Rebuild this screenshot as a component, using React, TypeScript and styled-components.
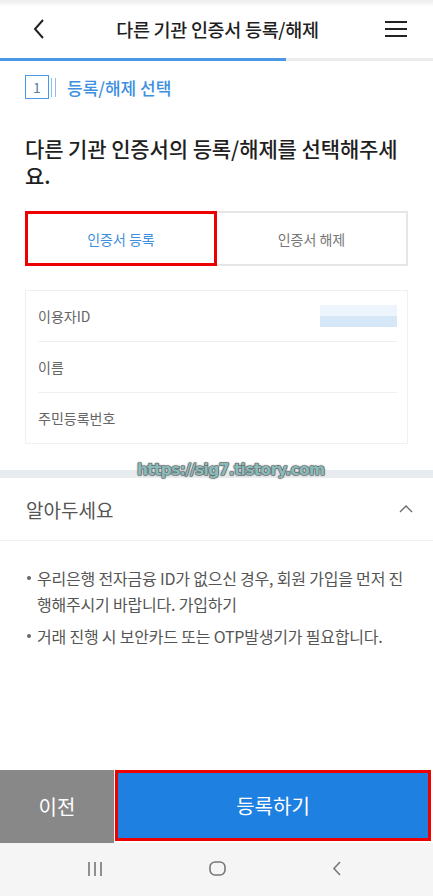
import styled, { createGlobalStyle } from "styled-components";

const GlobalStyle = createGlobalStyle`
    body {
        margin: 0;
        background: #fff;
        font-family: "Noto Sans CJK KR", "Noto Sans", sans-serif;
        color: #222;
    }
`

const Page = styled.div`
    position: relative;
    width: 433px;
    min-height: 896px;
    display: flex;
    flex-direction: column;
    overflow: hidden;
`

const Header = styled.header`
    height: 58px;
    display: flex;
    align-items: center;
    justify-content: space-between;
    padding: 0 25px 0 27px;
    background: linear-gradient(#ececec 0, #fff 7px);
    h1 {
        margin: 0;
        font-size: 18.5px;
        font-weight: 500;
        letter-spacing: -0.3px;
        color: #1f1f1f;
    }
`

const IconButton = styled.div`
    width: 24px;
    height: 24px;
    display: flex;
    align-items: center;
    justify-content: center;
`

const Progress = styled.div`
    height: 3px;
    background: #ececec;
`

const ProgressFill = styled.div<{ $ratio: number }>`
    height: 100%;
    width: ${(p) => p.$ratio * 100}%;
    background: #4a98e6;
`

const Content = styled.main`
    padding: 14px 25px 0;
`

const StepRow = styled.div`
    display: flex;
    align-items: center;
    height: 24px;
    span {
        margin-left: 11px;
        font-size: 17px;
        font-weight: 500;
        color: #3d8fe0;
    }
`

const StepNumber = styled.div`
    width: 22px;
    height: 22px;
    border: 1px solid #4a98e6;
    display: flex;
    align-items: center;
    justify-content: center;
    font-size: 14px;
    color: #5a7da0;
`

const StepLines = styled.div`
    margin-left: 2px;
    width: 3px;
    height: 19px;
    border-left: 1px solid #8cbcec;
    border-right: 1px solid #8cbcec;
`

const Heading = styled.h2`
    margin: 36px 0 0;
    max-width: 383px;
    font-size: 21px;
    line-height: 27px;
    font-weight: 500;
    color: #1f1f1f;
    letter-spacing: -0.1px;
`

const Tabs = styled.div`
    margin-top: 22px;
    display: grid;
    grid-template-columns: 192px 1fr;
    height: 55px;
`

const Tab = styled.button<{ $active?: boolean }>`
    font-family: inherit;
    font-size: 14px;
    background: #fff;
    cursor: pointer;
    color: ${(p) => (p.$active ? "#3d8fe0" : "#777")};
    border: ${(p) => (p.$active ? "3px solid #ee0000" : "2px solid #e6e6e6")};
    border-left: ${(p) => (p.$active ? "3px solid #ee0000" : "none")};
`

const InfoCard = styled.div`
    margin-top: 24px;
    border: 1px solid #f0f0f0;
    padding: 0 10px 0 12px;
`

const InfoRow = styled.div`
    height: 50px;
    display: flex;
    align-items: center;
    justify-content: space-between;
    font-size: 14px;
    color: #666;
    & + & {
        border-top: 1px solid #f0f0f0;
    }
`

const BlurredValue = styled.div`
    width: 77px;
    height: 22px;
    background: linear-gradient(#eef4fc 0 50%, #d6e8f8 50% 100%);
`

const Band = styled.div`
    position: relative;
    margin-top: 26px;
    height: 8px;
    background: #e9ecef;
`

const Watermark = styled.div`
    position: absolute;
    left: 137px;
    top: -9px;
    font-family: "DejaVu Sans", sans-serif;
    font-weight: bold;
    font-size: 15.5px;
    letter-spacing: -0.7px;
    color: #88bcbc;
    -webkit-text-stroke: 1px #555;
    paint-order: stroke fill;
    text-shadow: 0 0 2px #666, 0 0 2px #666;
`

const NoticeHeader = styled.div`
    height: 62px;
    padding: 0 20px 0 26px;
    display: flex;
    align-items: center;
    justify-content: space-between;
    border-bottom: 1px solid #f0f0f0;
    font-size: 19px;
    color: #555;
`

const NoticeList = styled.ul`
    margin: 0;
    padding: 24px 25px 0 27px;
    list-style: none;
    li {
        position: relative;
        padding-left: 10px;
        font-size: 16px;
        line-height: 26px;
        color: #555;
        letter-spacing: -0.2px;
    }
    li + li {
        margin-top: 6px;
    }
    li::before {
        content: "";
        position: absolute;
        left: 0;
        top: 11px;
        width: 4px;
        height: 4px;
        border-radius: 50%;
        background: #666;
    }
`

const Spacer = styled.div`
    flex: 1;
`

const ActionBar = styled.div`
    display: grid;
    grid-template-columns: 114px 1fr;
    height: 73px;
`

const ActionButton = styled.button<{ $primary?: boolean }>`
    font-family: inherit;
    font-size: 20px;
    color: #fff;
    cursor: pointer;
    background: ${(p) => (p.$primary ? "#1e80e0" : "#888")};
    border: ${(p) => (p.$primary ? "3px solid #ee0000" : "none")};
    margin: ${(p) => (p.$primary ? "0 2px 2px 1px" : "0")};
`

const NavBar = styled.nav`
    height: 51px;
    background: #f5f5f5;
    display: flex;
    align-items: center;
    justify-content: space-between;
    padding: 0 91px 2px 87px;
`

function App() {
    return (
        <Page>
            <GlobalStyle/>
            <Header>
                <IconButton>
                    <svg width="14" height="22" viewBox="0 0 14 22">
                        <path d="M11 2 L3 11 L11 20" fill="none" stroke="#222" strokeWidth="2"/>
                    </svg>
                </IconButton>
                <h1>다른 기관 인증서 등록/해제</h1>
                <IconButton>
                    <svg width="24" height="18" viewBox="0 0 24 18">
                        <path d="M1 2h22M1 9h22M1 16h22" stroke="#222" strokeWidth="2"/>
                    </svg>
                </IconButton>
            </Header>
            <Progress>
                <ProgressFill $ratio={0.661}/>
            </Progress>
            <Content>
                <StepRow>
                    <StepNumber>1</StepNumber>
                    <StepLines/>
                    <span>등록/해제 선택</span>
                </StepRow>
                <Heading>다른 기관 인증서의 등록/해제를 선택해주세요.</Heading>
                <Tabs>
                    <Tab $active>인증서 등록</Tab>
                    <Tab>인증서 해제</Tab>
                </Tabs>
                <InfoCard>
                    <InfoRow>이용자ID <BlurredValue/></InfoRow>
                    <InfoRow>이름</InfoRow>
                    <InfoRow>주민등록번호</InfoRow>
                </InfoCard>
            </Content>
            <Band>
                <Watermark>https://sig7.tistory.com</Watermark>
            </Band>
            <NoticeHeader>
                알아두세요
                <svg width="14" height="8" viewBox="0 0 14 8">
                    <path d="M1 7 L7 1 L13 7" fill="none" stroke="#666" strokeWidth="1.3"/>
                </svg>
            </NoticeHeader>
            <NoticeList>
                <li>우리은행 전자금융 ID가 없으신 경우, 회원 가입을 먼저 진행해주시기 바랍니다. 가입하기</li>
                <li>거래 진행 시 보안카드 또는 OTP발생기가 필요합니다.</li>
            </NoticeList>
            <Spacer/>
            <ActionBar>
                <ActionButton>이전</ActionButton>
                <ActionButton $primary>등록하기</ActionButton>
            </ActionBar>
            <NavBar>
                <svg width="16" height="14" viewBox="0 0 16 14">
                    <path d="M2 0v14M8 0v14M14 0v14" stroke="#777" strokeWidth="1.6"/>
                </svg>
                <svg width="17" height="15" viewBox="0 0 17 15">
                    <rect x="1" y="1" width="15" height="13" rx="5" fill="none" stroke="#777" strokeWidth="1.6"/>
                </svg>
                <svg width="10" height="15" viewBox="0 0 10 15">
                    <path d="M8 1 L2 7.5 L8 14" fill="none" stroke="#777" strokeWidth="1.6"/>
                </svg>
            </NavBar>
        </Page>
    )
}

export default App
